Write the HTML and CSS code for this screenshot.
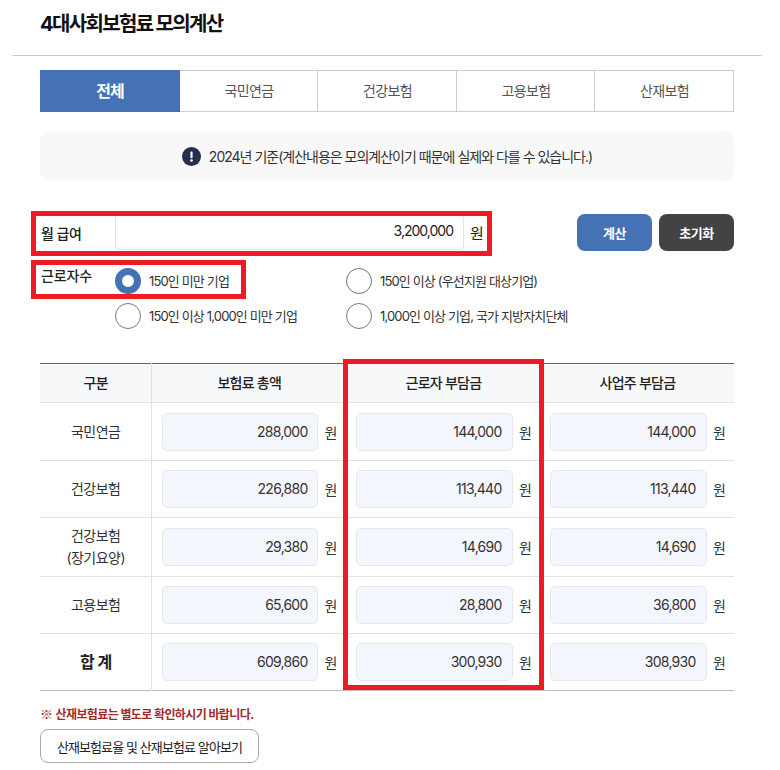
FILE: index.html
```html
<!DOCTYPE html>
<html lang="ko">
<head>
<meta charset="utf-8">
<title>4대사회보험료 모의계산</title>
<link rel="stylesheet" href="styles.css">
</head>
<body>
<div class="page">
  <header class="head"><h1>4대사회보험료 모의계산</h1></header>
  <main class="content">
    <nav class="tabs">
      <a class="tab active">전체</a>
      <a class="tab">국민연금</a>
      <a class="tab">건강보험</a>
      <a class="tab">고용보험</a>
      <a class="tab">산재보험</a>
    </nav>
    <div class="notice">
      <svg class="notice-icon" width="19" height="19" viewBox="0 0 19 19"><circle cx="9.5" cy="9.5" r="9.5" fill="#252e4f"/><rect x="8.4" y="4.6" width="2.2" height="6.6" rx="1" fill="#fff"/><circle cx="9.5" cy="13.5" r="1.3" fill="#fff"/></svg>
      <span>2024년 기준(계산내용은 모의계산이기 때문에 실제와 다를 수 있습니다.)</span>
    </div>
    <section class="form-row">
      <label class="field-label">월 급여</label>
      <div class="salary-input">3,200,000</div>
      <span class="unit-main">원</span>
      <div class="actions">
        <button class="btn btn-blue">계산</button>
        <button class="btn btn-dark">초기화</button>
      </div>
    </section>
    <section class="workers">
      <span class="field-label workers-label">근로자수</span>
      <div class="radios">
        <div class="radio-item"><span class="radio checked"></span><span class="radio-text">150인 미만 기업</span></div>
        <div class="radio-item"><span class="radio"></span><span class="radio-text">150인 이상 (우선지원 대상기업)</span></div>
        <div class="radio-item"><span class="radio"></span><span class="radio-text">150인 이상 1,000인 미만 기업</span></div>
        <div class="radio-item"><span class="radio"></span><span class="radio-text">1,000인 이상 기업, 국가 지방자치단체</span></div>
      </div>
    </section>
    <table class="calc">
      <colgroup><col class="c1"><col class="c2a"><col class="c2"><col class="c2"></colgroup>
      <thead>
        <tr><th>구분</th><th>보험료 총액</th><th>근로자 부담금</th><th>사업주 부담금</th></tr>
      </thead>
      <tbody>
        <tr class="r58"><th>국민연금</th>
          <td><div class="cell"><div class="val">288,000</div><span>원</span></div></td>
          <td><div class="cell"><div class="val">144,000</div><span>원</span></div></td>
          <td><div class="cell"><div class="val">144,000</div><span>원</span></div></td></tr>
        <tr class="r57"><th>건강보험</th>
          <td><div class="cell"><div class="val">226,880</div><span>원</span></div></td>
          <td><div class="cell"><div class="val">113,440</div><span>원</span></div></td>
          <td><div class="cell"><div class="val">113,440</div><span>원</span></div></td></tr>
        <tr class="r59"><th>건강보험<br>(장기요양)</th>
          <td><div class="cell"><div class="val">29,380</div><span>원</span></div></td>
          <td><div class="cell"><div class="val">14,690</div><span>원</span></div></td>
          <td><div class="cell"><div class="val">14,690</div><span>원</span></div></td></tr>
        <tr class="r57"><th>고용보험</th>
          <td><div class="cell"><div class="val">65,600</div><span>원</span></div></td>
          <td><div class="cell"><div class="val">28,800</div><span>원</span></div></td>
          <td><div class="cell"><div class="val">36,800</div><span>원</span></div></td></tr>
        <tr class="r57 total"><th>합 계</th>
          <td><div class="cell"><div class="val">609,860</div><span>원</span></div></td>
          <td><div class="cell"><div class="val">300,930</div><span>원</span></div></td>
          <td><div class="cell"><div class="val">308,930</div><span>원</span></div></td></tr>
      </tbody>
    </table>
    <p class="warn"><span class="warn-mark">※</span>산재보험료는 별도로 확인하시기 바랍니다.</p>
    <button class="link-btn">산재보험료율 및 산재보험료 알아보기</button>
  </main>
  <div class="mark mark-salary"></div>
  <div class="mark mark-radio"></div>
  <div class="mark mark-col"></div>
</div>
</body>
</html>
```

FILE: styles.css
```css
* { box-sizing: border-box; }
html, body { margin: 0; padding: 0; background: #fff; }
body {
  font-family: "Inter", "Noto Sans CJK KR", sans-serif;
  color: #333;
  font-size: 13px;
  letter-spacing: -0.5px;
}
.page { position: relative; width: 780px; height: 770px; overflow: hidden; }

.head { margin: 0 18px 0 12px; height: 56px; padding-left: 28px; border-bottom: 1px solid #ccc; }
.head h1 { margin: 0; padding-top: 10px; font-size: 20px; line-height: 28px; font-weight: 700; color: #111; letter-spacing: -1.65px; }

.content { padding: 14px 46px 0 40px; }

.tabs { display: grid; grid-template-columns: 140px 138px 139px 138px 139px; height: 42px; }
.tab {
  display: flex; align-items: center; justify-content: center;
  border: 1px solid #ccccd4; border-left: 0; padding: 0 0 2px 1px;
  font-size: 14px; color: #555; letter-spacing: -0.6px;
}
.tab.active { background: #4472b4; border-color: #4472b4; color: #fff; font-weight: 700; font-size: 16px; letter-spacing: -1px; }

.notice {
  margin-top: 19px; height: 50px; border-radius: 10px; background: #f8f8f8;
  display: flex; align-items: center; justify-content: center; gap: 8px;
  font-size: 14px; color: #333; letter-spacing: -1px;
}
.notice-icon { flex: none; }

.form-row { margin-top: 33px; display: flex; align-items: center; height: 37px; }
.field-label { width: 75px; padding-left: 1px; font-size: 14px; color: #222; font-weight: 500; flex: none; }
.salary-input {
  width: 349px; height: 35px; line-height: 32px; padding-right: 10px; text-align: right;
  border: 1px solid #e2e2e6; border-top: 0; border-radius: 4px;
  font-size: 14px; color: #222; letter-spacing: -1px;
}
.unit-main { margin-left: 6px; font-size: 15px; color: #222; }
.actions { margin-left: auto; display: flex; gap: 7px; }
.btn {
  width: 75px; height: 37px; border: 0; border-radius: 8px;
  font: inherit; font-size: 13px; font-weight: 700; color: #fff; letter-spacing: -0.5px;
}
.btn-blue { background: #4472b4; }
.btn-dark { background: #434345; }

.workers { margin-top: 16px; display: flex; align-items: flex-start; }
.workers-label { line-height: 18px; letter-spacing: -0.1px; }
.radios { display: grid; grid-template-columns: 231px 1fr; row-gap: 8px; }
.radio-item { display: flex; align-items: center; gap: 8px; height: 27px; font-size: 13px; color: #333; letter-spacing: -0.85px; }
.radio-text { padding-bottom: 1px; }
.radio { width: 26px; height: 26px; border-radius: 50%; border: 1px solid #777; background: #fff; flex: none; }
.radio.checked { border: 7px solid #4472b4; }

.calc { margin-top: 34px; width: 694px; table-layout: fixed; border-collapse: collapse; border-top: 1px solid #666; border-bottom: 1px solid #bbb; }
.c1 { width: 111px; }
.c2a { width: 195px; }
.c2 { width: 194px; }
.calc thead th { height: 39px; background: #f7f8fa; font-size: 14px; font-weight: 500; color: #222; padding: 0 0 2px 1px; border-bottom: 1px solid #e2e2e2; letter-spacing: -0.75px; }
.calc thead th:first-child { border-right: 1px solid #e2e2e2; }
.calc tbody th { font-size: 14px; font-weight: 400; line-height: 22px; color: #333; padding: 0 0 0 1px; border-right: 1px solid #e2e2e2; border-bottom: 1px solid #e2e2e2; }
.calc td { padding: 0 0 0 10px; border-bottom: 1px solid #e2e2e2; }
.calc tbody tr:last-child th, .calc tbody tr:last-child td { border-bottom: 0; }
.r58 { height: 58px; }
.r57 { height: 57px; }
.r59 { height: 59px; }
.calc tbody .total th { font-size: 16px; font-weight: 700; color: #222; }
.cell { display: flex; align-items: center; gap: 6px; font-size: 14px; }
th + td .cell { gap: 7px; }
.val {
  width: 156px; height: 38px; line-height: 36px; padding-right: 9px; text-align: right;
  background: #f3f6fc; border: 1px solid #e6e8ec; border-radius: 5px;
  font-size: 14px; color: #333; letter-spacing: -0.75px;
}
td + td .val { width: 157px; padding-right: 10.5px; }

.warn { margin: 15px 0 0; font-size: 12px; line-height: 16px; font-weight: 700; color: #a32a2a; letter-spacing: -0.6px; }
.warn-mark { font-family: "Noto Sans CJK KR", sans-serif; display: inline-block; width: 15.5px; font-size: 13px; }
.link-btn {
  display: block; margin-top: 6px; width: 219px; height: 34px;
  background: #fff; border: 1px solid #aaa; border-radius: 8px;
  font: inherit; font-size: 13px; color: #222; letter-spacing: -0.9px;
}

.mark { position: absolute; border: 5px solid #ed1c24; pointer-events: none; }
.mark-salary { left: 31px; top: 211px; width: 461px; height: 45px; }
.mark-radio { left: 31px; top: 260px; width: 215px; height: 39px; }
.mark-col { left: 343px; top: 359px; width: 201px; height: 331px; }
```
